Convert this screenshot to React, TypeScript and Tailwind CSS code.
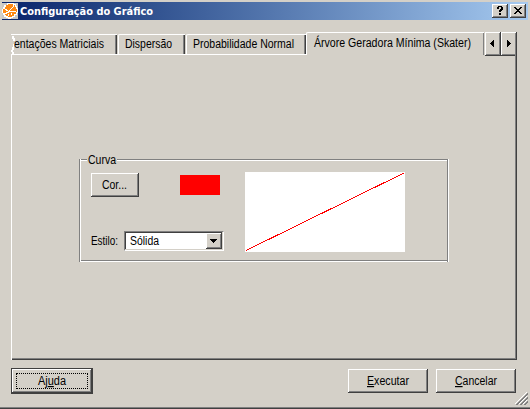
import type { ReactNode } from "react";

const raised =
  "bg-[#d4d0c8] shadow-[inset_-1px_-1px_#404040,inset_1px_1px_#fff,inset_-2px_-2px_#808080]";

/* Text run stretched or squeezed to the width of the bitmap dialog font. */
function Label({ w, children }: { w: number; children: ReactNode }) {
  return (
    <svg width={w} height="16" className="block shrink-0 overflow-visible">
      <text x="0" y="12" textLength={w} lengthAdjust="spacingAndGlyphs" className="fill-black text-[12px]">
        {children}
      </text>
    </svg>
  );
}

function TitleButton({ children }: { children: ReactNode }) {
  return (
    <button className={`flex h-[14px] w-4 items-center justify-center ${raised}`}>
      <svg width="16" height="14" shapeRendering="crispEdges">
        {children}
      </svg>
    </button>
  );
}

function Tab({ width, className = "", children }: { width: string; className?: string; children: ReactNode }) {
  return (
    <div
      className={`mt-[2px] flex h-5 shrink-0 rounded-tl-[2px] border-t border-l border-white pt-[1px] shadow-[inset_-1px_0_#404040,inset_-2px_0_#808080] ${width} ${className}`}
    >
      {children}
    </div>
  );
}

export default function App() {
  return (
    <div className="flex h-[409px] w-[530px] flex-col overflow-hidden bg-[#d4d0c8] pt-[2px] pl-[2px] font-['Liberation_Sans',sans-serif] text-[12px] text-black shadow-[inset_0_-1px_#404040,inset_0_-2px_#808080]">
      <header className="flex h-[18px] w-[526px] shrink-0 items-center bg-linear-to-r from-[#0a246a] to-[#a6caf0]">
        <svg width="16" height="16" viewBox="0 0 16 16" className="shrink-0" shapeRendering="crispEdges">
          <rect width="16" height="16" fill="#c9c7c5" />
          <path d="M5 0h7v1h2v2h1v2h1v5h-1v2h-2v2h-2v1H9v1H6v-1H4v-1H2v-2H1v-2H0V6h1V4h1V2h3z" fill="#fff" />
          <path d="M6 1h5v1h2v2h1v2h1v3h-1v2h-2v2h-2v1H6v-1H4v-1H3v-2H1V6h2V4h1V2h2z" fill="#ff8a14" />
          <path d="M11 2h1v2h-1v1h-1v1H9v1H8v1h6v1H7v1H5v1H3v-1h1V9h2V8h1V7h1V6h1V5h1V4h1zM4 6h1v1h1v1H4V7H3V6zM9 10h1v2H9zM6 11h1v2H6z" fill="#fff" />
        </svg>
        <svg width="136" height="16" className="ml-[2px] shrink-0 overflow-visible">
          <text x="0" y="12" textLength="133" lengthAdjust="spacingAndGlyphs" className="fill-white font-['DejaVu_Sans_Condensed','DejaVu_Sans',sans-serif] text-[11px] font-bold">
            Configuração do Gráfico
          </text>
        </svg>
        <div className="ml-auto flex gap-[2px] pr-[2px]">
          <TitleButton>
            <path d="M5 3h1V2h4v1h1v3h-1v1H9v1H7V6h1V5h1V3H7v2H5zM7 9h2v2H7z" />
          </TitleButton>
          <TitleButton>
            <path d="M4 3h2v1h1v1h2V4h1V3h2v1h-1v1h-1v1H9v1h1v1h1v1h1v1h-2V9H9V8H7v1H6v1H4V9h1V8h1V7h1V6H6V5H5V4H4z" />
          </TitleButton>
        </div>
      </header>

      <nav className="mt-3 ml-[9px] flex h-[22px] w-[506px] shrink-0">
        <div className="mt-[2px] flex h-5 w-[106px] shrink-0 border-t border-white pt-[1px] shadow-[inset_-1px_0_#404040,inset_-2px_0_#808080]">
          <svg width="4" height="19" className="shrink-0" shapeRendering="crispEdges">
            <path d="M1 0h2v2h1v3H3v3H2v3H1v3H0v2h1v3h2v-3H2v-2h1V9h1V7H3V5H2V3H1z" fill="#fff" />
          </svg>
          <div className="-ml-[1px]">
            <Label w={90}>entações Matriciais</Label>
          </div>
        </div>
        <Tab width="w-[67px]" className="ml-[1px] pl-[6px]">
          <Label w={47}>Dispersão</Label>
        </Tab>
        <Tab width="w-[120px]" className="ml-[1px] pl-[6px]">
          <Label w={101}>Probabilidade Normal</Label>
        </Tab>
        <div className="flex h-[23px] w-[178px] shrink-0 rounded-tl-[2px] border-t border-l border-white bg-[#d4d0c8] pt-[2px] pl-[7px] shadow-[inset_-1px_0_#808080]">
          <Label w={157}>Árvore Geradora Mínima (Skater)</Label>
        </div>
        <div className="ml-[1px] flex h-6 w-8 shrink-0">
          <button className={`flex w-4 items-center justify-center ${raised}`}>
            <svg width="16" height="24" shapeRendering="crispEdges"><path d="M9 8v7H8v-1H7v-1H6v-1H5v-1h1v-1h1V9h1V8z" /></svg>
          </button>
          <button className={`flex w-4 items-center justify-center ${raised}`}>
            <svg width="16" height="24" shapeRendering="crispEdges"><path d="M6 8v7h1v-1h1v-1h1v-1h1v-1H9v-1H8V9H7V8z" /></svg>
          </button>
        </div>
      </nav>

      <main className="ml-[9px] flex h-[306px] w-[506px] shrink-0 border-l border-white shadow-[inset_-1px_-1px_#404040,inset_-2px_-2px_#808080]">
        <div className="flex w-full flex-col">
          <div className="h-px w-[294px] shrink-0 bg-white" />
          <section className="mt-[97px] ml-[67px] flex h-[110px] w-[370px] flex-col">
            <div className="flex h-[7px] shrink-0 pl-[9px]">
              <Label w={28}>Curva</Label>
            </div>
            <div className="flex h-[103px]">
              <div className="w-[2px] border-l border-[#808080] shadow-[inset_1px_0_#fff]" />
              <div className="flex w-[366px] flex-col">
                <div className="flex h-[2px] shrink-0">
                  <div className="w-[6px] border-y border-t-[#808080] border-b-white" />
                  <div className="w-[30px]" />
                  <div className="flex-1 border-y border-t-[#808080] border-b-white" />
                </div>
                <div className="flex flex-1 pt-[11px] pl-[10px]">
                  <div className="w-[154px]">
                    <div className="flex h-[59px] items-start">
                      <button className={`mt-[1px] flex h-6 w-12 pt-[4px] pl-[11px] ${raised}`}>
                        <Label w={25}>Cor...</Label>
                      </button>
                      <div className="mt-[3px] ml-[41px] h-5 w-10 bg-[#f00]" />
                    </div>
                    <div className="flex h-5">
                      <div className="w-[33px] pt-[2px]"><Label w={27}>Estilo:</Label></div>
                      <div className="flex h-5 w-[100px] border border-t-[#808080] border-r-white border-b-white border-l-[#808080] bg-white shadow-[inset_-1px_-1px_#d4d0c8,inset_1px_1px_#404040]">
                        <div className="w-[81px] pt-[1px] pl-[5px]"><Label w={29}>Sólida</Label></div>
                        <button className={`mt-[1px] h-4 w-4 ${raised}`}>
                          <svg width="16" height="16" shapeRendering="crispEdges"><path d="M4 6h7v1h-1v1H9v1H8v1H7V9H6V8H5V7H4z" /></svg>
                        </button>
                      </div>
                    </div>
                  </div>
                  <svg width="160" height="80" className="bg-white" shapeRendering="crispEdges">
                    <path d="M1 78.5L159 1" stroke="#f00" />
                  </svg>
                </div>
                <div className="h-[2px] shrink-0 border-y border-t-[#808080] border-b-white" />
              </div>
              <div className="w-[2px] border-r border-white shadow-[inset_1px_0_#808080]" />
            </div>
          </section>
        </div>
      </main>

      <footer className="ml-[9px] flex h-[47px] w-[517px] shrink-0 pt-2">
        <button className="flex h-[26px] w-[82px] border border-[#404040] bg-[#d4d0c8] p-[4px] shadow-[inset_-1px_-1px_#404040,inset_1px_1px_#fff,inset_-2px_-2px_#808080]">
          <span className="flex h-4 w-[72px] border border-dotted border-black pl-[21px]">
            <span className="-mt-[1px]"><Label w={28}>Aj<tspan textDecoration="underline">u</tspan>da</Label></span>
          </span>
        </button>
        <button className={`mt-[1px] ml-[255px] flex h-6 w-20 pt-[4px] pl-[19px] ${raised}`}>
          <Label w={42}><tspan textDecoration="underline">E</tspan>xecutar</Label>
        </button>
        <button className={`mt-[1px] ml-2 flex h-6 w-20 pt-[4px] pl-[19px] ${raised}`}>
          <Label w={42}><tspan textDecoration="underline">C</tspan>ancelar</Label>
        </button>
        <svg width="13" height="13" className="mt-6 -ml-[1px] shrink-0" shapeRendering="crispEdges">
          <path d="M0 12L12 0M4 12l8-8M8 12l4-4" stroke="#fff" />
          <path d="M1 13L13 1M2 13L13 2M5 13l8-8M6 13l7-7M9 13l4-4M10 13l3-3" stroke="#808080" strokeWidth="1.2" />
        </svg>
      </footer>
    </div>
  );
}
